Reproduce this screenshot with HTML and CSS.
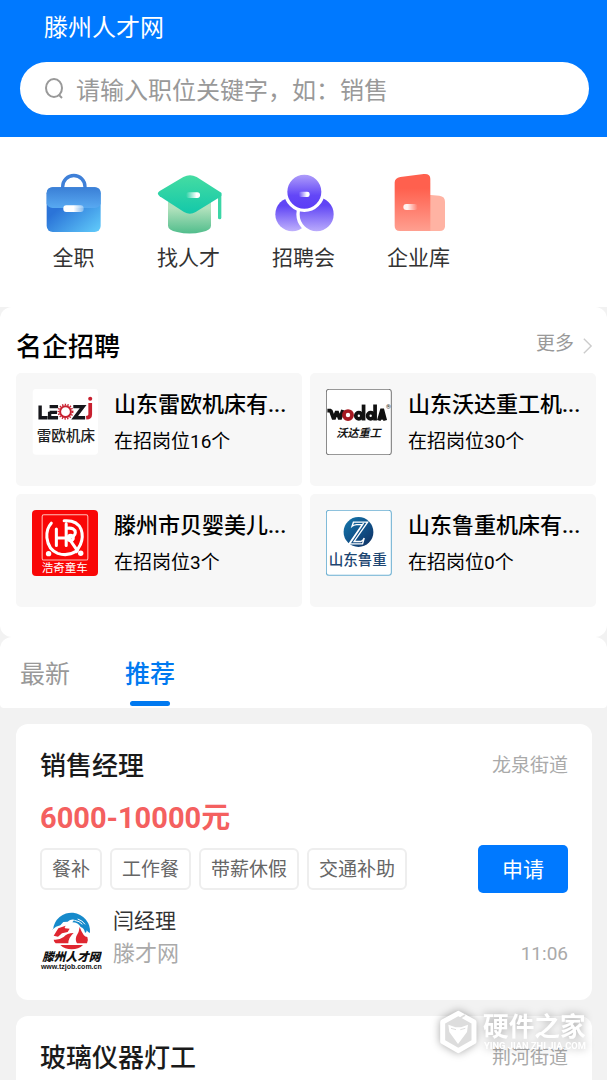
FILE: index.html
```html
<!DOCTYPE html>
<html lang="zh-CN">
<head>
<meta charset="utf-8">
<meta name="viewport" content="width=device-width, initial-scale=1">
<title>滕州人才网</title>
<link rel="stylesheet" href="styles.css">
</head>
<body>
<div class="app">
  <header class="header">
    <h1 class="header-title">滕州人才网</h1>
    <label class="search">
      <svg class="search-icon" viewBox="0 0 22 22" aria-hidden="true"><ellipse cx="10" cy="10" rx="8" ry="9"/><path d="M15 17l3 3"/></svg>
      <input class="search-input" type="search" aria-label="搜索职位" placeholder="请输入职位关键字，如：销售">
    </label>
  </header>

  <nav class="menu">
    <a class="menu-item" href="#full-time">
      <svg class="menu-icon" viewBox="34 30 198 198" aria-hidden="true">
        <defs>
          <linearGradient id="caseBody" x1="0" y1="0" x2="1" y2="1"><stop offset=".35" stop-color="#2b74d8"/><stop offset="1" stop-color="#62cdfb"/></linearGradient>
          <linearGradient id="caseTop" x1="0" y1="0" x2="0" y2="1"><stop offset="0" stop-color="#3a7fd6"/><stop offset="1" stop-color="#58a9f1"/></linearGradient>
          <linearGradient id="shine" x1="0" x2="1"><stop offset="0" stop-color="#fff"/><stop offset=".5" stop-color="#fff"/><stop offset="1" stop-color="#fff" stop-opacity=".35"/></linearGradient>
        </defs>
        <path d="M99 84v-4a33 33 0 0 1 67 0v4" fill="none" stroke="#3f80d8" stroke-width="10"/>
        <rect x="51" y="82" width="162" height="134" rx="18" fill="url(#caseBody)"/>
        <path d="M51 100q0-18 18-18h126q18 0 18 18v30q-2 13-18 14H69q-16-1-18-14z" fill="url(#caseTop)"/>
        <rect x="101" y="136" width="61" height="20" rx="9" fill="url(#shine)"/>
      </svg>
      <span>全职</span>
    </a>
    <a class="menu-item" href="#talent">
      <svg class="menu-icon" viewBox="378 30 198 198" aria-hidden="true">
        <defs>
          <linearGradient id="capTop" x1="0" y1="0" x2="0" y2="1"><stop offset="0" stop-color="#45dca2"/><stop offset="1" stop-color="#13c8aa"/></linearGradient>
          <linearGradient id="capBase" x1="0" y1="0" x2="0" y2="1"><stop offset=".2" stop-color="#b2e2bd"/><stop offset="1" stop-color="#51bd8c"/></linearGradient>
          <linearGradient id="shineRight" x1="0" x2="1"><stop offset="0" stop-color="#fff" stop-opacity="0"/><stop offset=".75" stop-color="#fff"/></linearGradient>
        </defs>
        <path d="M414 125h129v72q0 13-27 19-37 9-75 0-27-6-27-19z" fill="url(#capBase)"/>
        <path d="M569 106v67" stroke="#3bd6a6" stroke-width="10" stroke-linecap="round"/>
        <path d="M389 93l71-42q20-11 40 0l74 47q3 8-4 13l-73 45q-17 10-35 0l-73-47q-11-9 0-16z" fill="url(#capTop)"/>
        <rect x="468" y="97" width="42" height="17" rx="8" fill="url(#shineRight)"/>
      </svg>
      <span>找人才</span>
    </a>
    <a class="menu-item" href="#fairs">
      <svg class="menu-icon" viewBox="64 30 198 198" aria-hidden="true">
        <defs>
          <linearGradient id="ballTop" x1="0" y1="0" x2="0" y2="1"><stop offset="0" stop-color="#b5a4fa"/><stop offset=".6" stop-color="#6347f7"/><stop offset="1" stop-color="#5a3cf6"/></linearGradient>
          <linearGradient id="ballLow" x1="0" y1="0" x2="0" y2="1"><stop offset=".25" stop-color="#6045f5"/><stop offset="1" stop-color="#c0b2fc"/></linearGradient>
        </defs>
        <circle cx="128" cy="163" r="51" fill="url(#ballLow)"/>
        <circle cx="201" cy="163" r="56" fill="url(#ballLow)" stroke="#fff" stroke-width="10"/>
        <circle cx="164" cy="95" r="56" fill="url(#ballTop)" stroke="#fff" stroke-width="10"/>
        <rect x="147" y="95" width="33" height="16" rx="7" fill="url(#shineRight)"/>
      </svg>
      <span>招聘会</span>
    </a>
    <a class="menu-item" href="#companies">
      <svg class="menu-icon" viewBox="409 30 198 198" aria-hidden="true">
        <defs>
          <linearGradient id="tower" x1="0" y1="0" x2="0" y2="1"><stop offset=".25" stop-color="#ff604e"/><stop offset="1" stop-color="#ff9f90"/></linearGradient>
          <linearGradient id="shineLeft" x1="0" x2="1"><stop offset=".3" stop-color="#fff" stop-opacity=".9"/><stop offset="1" stop-color="#fff" stop-opacity="0"/></linearGradient>
        </defs>
        <path d="M535 104l34 3q17 2 17 18v74q0 14-16 14h-35z" fill="#ffb3a3"/>
        <path d="M435 68q0-14 17-17l70-9q20-2 20 15v156h-91q-16 0-16-15z" fill="url(#tower)"/>
        <rect x="461" y="132" width="43" height="18" rx="9" fill="url(#shineLeft)"/>
      </svg>
      <span>企业库</span>
    </a>
  </nav>

  <section class="famous">
    <div class="famous-head">
      <h2 class="famous-title">名企招聘</h2>
      <a class="more" href="#more">更多
        <svg class="more-icon" viewBox="0 0 12 20" aria-hidden="true"><path d="M2 2l8 8-8 8"/></svg>
      </a>
    </div>
    <div class="company-grid">
      <a class="company" href="#leozi">
        <svg class="company-logo" viewBox="97 267 195 195" role="img" aria-label="LEOZi">
          <rect x="99" y="267" width="193" height="194" rx="10" fill="#fff"/>
          <g fill="none" stroke="#17171c" stroke-width="10"><path d="M121 316v36h22M174 319h-25M171 336h-22M174 352h-25v-18M219 319h29l-25 33h31"/></g>
          <circle cx="196" cy="334" r="16" fill="none" stroke="#c8202f" stroke-width="6"/>
          <circle cx="196" cy="334" r="21" fill="none" stroke="#c8202f" stroke-width="5" stroke-dasharray="4 4"/>
          <path d="M269 308v34q0 9-12 10" fill="none" stroke="#c8202f" stroke-width="11"/>
          <circle cx="269" cy="296" r="6" fill="#c8202f"/>
          <text x="197" y="422" text-anchor="middle" font-size="43" font-weight="500" fill="#222">雷欧机床</text>
        </svg>
        <div class="company-text">
          <h3 class="company-name">山东雷欧机床有...</h3>
          <p class="company-count">在招岗位16个</p>
        </div>
      </a>
      <a class="company" href="#wodda">
        <svg class="company-logo" viewBox="79 266 195 195" role="img" aria-label="wodda">
          <rect x="80" y="267" width="192" height="193" rx="8" fill="#fff" stroke="#777" stroke-width="3"/>
          <g fill="none" stroke="#111" stroke-width="11" stroke-linejoin="bevel"><path d="M83 330h10l9 25 9-23 9 23 9-27"/><circle cx="144" cy="343" r="12" stroke="#a51820"/><circle cx="176" cy="345" r="9"/><path d="M190 312v47"/><circle cx="211" cy="345" r="9"/><path d="M224 312v47M235 359l10-34 9 34M238 351h13"/></g>
          <text x="256" y="324" font-size="18" fill="#222">®</text>
          <text x="175" y="409" text-anchor="middle" font-size="33" font-weight="700" font-style="italic" fill="#181818">沃达重工</text>
        </svg>
        <div class="company-text">
          <h3 class="company-name">山东沃达重工机...</h3>
          <p class="company-count">在招岗位30个</p>
        </div>
      </a>
      <a class="company" href="#haoqi">
        <svg class="company-logo" viewBox="97 75 195 195" role="img" aria-label="浩奇童车">
          <rect x="97" y="75" width="195" height="195" rx="12" fill="#f90707"/>
          <rect x="127" y="89" width="135" height="134" rx="5" fill="none" stroke="#ffc0b8" stroke-width="3"/>
          <g fill="none" stroke="#fff" stroke-width="9" stroke-linecap="round">
            <path d="M154 114q-15 16-13 43 4 35 32 46 30 10 54-6M169 131v49M169 158h29M198 116v64M192 107q38-3 50 25 8 23-2 45l-12 21"/>
            <path d="M200 129q24-3 25 13-1 13-20 15l26 38"/><circle cx="211" cy="158" r="8"/>
          </g>
          <circle cx="146" cy="204" r="8" fill="#fff"/><circle cx="241" cy="203" r="8" fill="#fff"/>
          <text x="194" y="257" text-anchor="middle" font-size="34" fill="#fff">浩奇童车</text>
        </svg>
        <div class="company-text">
          <h3 class="company-name">滕州市贝婴美儿...</h3>
          <p class="company-count">在招岗位3个</p>
        </div>
      </a>
      <a class="company" href="#luzhong">
        <svg class="company-logo" viewBox="79 75 195 195" role="img" aria-label="山东鲁重">
          <defs><linearGradient id="disc" x1="0" y1="0" x2="1" y2="1"><stop offset="0" stop-color="#1478ad"/><stop offset=".6" stop-color="#104c83"/><stop offset="1" stop-color="#112d5c"/></linearGradient></defs>
          <rect x="80" y="76" width="192" height="192" rx="8" fill="#fff" stroke="#6aafd2" stroke-width="3"/>
          <circle cx="175" cy="140" r="44" fill="url(#disc)"/>
          <path d="M156 123l4-12h42l-40 57h20q6-1 10-10l-5 17h-40l39-57h-17q-8 1-13 5zM190 114l-39 58" fill="none" stroke="#fff" stroke-width="4"/>
          <text x="173" y="237" text-anchor="middle" font-size="43" font-weight="500" fill="#1d4672">山东鲁重</text>
        </svg>
        <div class="company-text">
          <h3 class="company-name">山东鲁重机床有...</h3>
          <p class="company-count">在招岗位0个</p>
        </div>
      </a>
    </div>
  </section>

  <div class="tabs" role="tablist">
    <button class="tab" type="button" role="tab" aria-selected="false">最新</button>
    <button class="tab tab-active" type="button" role="tab" aria-selected="true">推荐</button>
  </div>

  <main class="jobs">
    <article class="job">
      <div class="job-head">
        <h2 class="job-title">销售经理</h2>
        <span class="job-place">龙泉街道</span>
      </div>
      <p class="job-pay">6000-10000元</p>
      <div class="job-row">
        <ul class="tags">
          <li class="tag">餐补</li>
          <li class="tag">工作餐</li>
          <li class="tag">带薪休假</li>
          <li class="tag">交通补助</li>
        </ul>
        <button class="apply" type="button">申请</button>
      </div>
      <div class="contact">
        <svg class="contact-logo" viewBox="63 50 186 186" role="img" aria-label="滕州人才网">
          <path d="M102 112A55 55 0 0 1 213 122q-6-2-10-8 0 8-5 7-2-13-13-17-7-14-25-14l6-8q-12-2-20 6l-13 1-9 10q-14 3-24 13z" fill="#168acb"/>
          <path d="M104 130l14-22 22-8q-5 6-2 8l14 1-6 10-17 4-12 10zM104 142q16 2 30-8 10-12 30-12-16 14-16 31h-38q-5-5-6-11zM182 104q-2 18-10 28-4 12 2 21h30q5-9 1-19-12 0-23-30z" fill="#df2630"/>
          <path d="M124 158h68q-13 13-34 13t-34-13z" fill="#df2630"/>
          <path d="M166 84q16 2 24 12M176 80q14 4 22 16" fill="none" stroke="#fff" stroke-width="3"/>
          <text x="157" y="207" text-anchor="middle" font-size="35" font-weight="900" font-style="italic" fill="#111">滕州人才网</text>
          <text x="157" y="231" text-anchor="middle" class="logo-url" font-size="21" font-weight="700" fill="#111">www.tzjob.com.cn</text>
        </svg>
        <div class="contact-text">
          <p class="contact-name">闫经理</p>
          <p class="contact-company">滕才网</p>
        </div>
        <time class="job-time">11:06</time>
      </div>
    </article>
    <article class="job">
      <div class="job-head">
        <h2 class="job-title">玻璃仪器灯工</h2>
        <span class="job-place">荆河街道</span>
      </div>
    </article>
  </main>

  <svg class="watermark" viewBox="405 315 465 159" role="img" aria-label="硬件之家">
    <path d="M475 340l47 26v59l-47 27-47-27v-59z" fill="#ddd" stroke="#fff" stroke-width="15" stroke-linejoin="round"/>
    <path d="M478 356l17-11" stroke="#ddd" stroke-width="5"/>
    <path d="M445 374l22 8h16l21-8-3 22-27 36-26-36z" fill="#fff"/><path d="M453 385l15 4M496 385l-15 4" stroke="#ddd" stroke-width="3"/>
    <text x="549" y="407" font-size="77" font-weight="700" fill="#fff">硬件之家</text>
    <text x="552" y="448" class="mark-url" font-size="28" font-weight="700" fill="#fff">YING JIAN ZHI JIA.COM</text>
  </svg>
</div>
</body>
</html>
```
FILE: styles.css
```css
* {
  box-sizing: border-box;
  margin: 0;
  padding: 0;
}

body {
  background: #f2f2f2;
  color: #000;
  font-family: Roboto, "Noto Sans CJK SC", sans-serif;
}

a {
  color: inherit;
  text-decoration: none;
}

button,
input {
  border: 0;
  font: inherit;
}

.app {
  position: relative;
  display: flex;
  flex-direction: column;
  height: 100vh;
  overflow: hidden;
}

.app > * {
  flex-shrink: 0;
}

.header {
  padding: 10px 18px 22px 20px;
  background: #0079ff;
}

.header-title {
  margin-bottom: 16px;
  padding-left: 24px;
  color: #fff;
  font-size: 24px;
  font-weight: 400;
  line-height: 36px;
}

.search {
  display: flex;
  align-items: center;
  gap: 10px;
  height: 53px;
  padding: 0 24px;
  border-radius: 27px;
  background: #fff;
}

.search-icon {
  flex: none;
  width: 22px;
  height: 22px;
  fill: none;
  stroke: #999;
  stroke-width: 2;
}

.search-input {
  flex: 1;
  min-width: 0;
  outline: 0;
  background: transparent;
  font-family: "Noto Sans CJK JP", sans-serif;
  font-size: 24px;
  line-height: 36px;
}

.search-input::placeholder {
  color: #999;
}

.menu {
  display: grid;
  grid-template-columns: repeat(5, 1fr);
  padding: 33px 16px;
  background: #fff;
}

.menu-item {
  display: flex;
  flex-direction: column;
  align-items: center;
  gap: 6px;
  color: #333;
  font-size: 21px;
  line-height: 32px;
}

.menu-icon {
  width: 66px;
  height: 66px;
}

.famous {
  padding: 18px 11px 30px 16px;
  border-radius: 12px;
  background: #fff;
}

.famous-head {
  display: flex;
  align-items: flex-start;
  justify-content: space-between;
  height: 48px;
}

.famous-title {
  padding-top: 4px;
  font-size: 26px;
  font-weight: 500;
  line-height: 36px;
}

.more {
  display: flex;
  align-items: center;
  gap: 8px;
  padding-top: 5px;
  padding-right: 3px;
  color: #999;
  font-size: 19px;
  line-height: 28px;
}

.more-icon {
  width: 11px;
  height: 20px;
  margin-top: 3px;
  fill: none;
  stroke: #ccc;
  stroke-width: 1.5;
}

.company-grid {
  display: grid;
  grid-template-columns: 1fr 1fr;
  gap: 8px;
}

.company {
  display: flex;
  gap: 16px;
  height: 113px;
  padding: 16px 8px 16px 16px;
  border-radius: 5px;
  background: #f7f7f7;
}

.company-logo {
  flex: none;
  width: 66px;
  height: 66px;
}

.company-text {
  min-width: 0;
}

.company-name {
  overflow: hidden;
  font-size: 22px;
  font-weight: 500;
  line-height: 32px;
  white-space: nowrap;
}

.company-count {
  margin-top: 7px;
  font-size: 19px;
  line-height: 28px;
}

.tabs {
  display: flex;
  gap: 55px;
  padding: 0 20px;
  border-radius: 12px 12px 4px 4px;
  background: #fff;
}

.tab {
  position: relative;
  padding: 20px 0 15px;
  background: transparent;
  color: #999;
  cursor: pointer;
  font-size: 25px;
  line-height: 36px;
}

.tab-active {
  color: #0079f0;
  font-weight: 500;
}

.tab-active::after {
  position: absolute;
  right: 5px;
  bottom: 2px;
  left: 5px;
  height: 5px;
  border-radius: 3px;
  background: #0079f0;
  content: "";
}

.jobs {
  display: flex;
  flex-direction: column;
  gap: 16px;
  padding: 16px 15px 16px 16px;
}

.job {
  padding: 24px 24px 29px;
  border-radius: 12px;
  background: #fff;
}

.job-head {
  display: flex;
  align-items: center;
  justify-content: space-between;
}

.job-title {
  color: #1a1a1a;
  font-size: 26px;
  font-weight: 500;
  line-height: 36px;
}

.job-place,
.job-time {
  color: #aaa;
  font-size: 19px;
  line-height: 28px;
}

.job-time {
  padding-bottom: 3px;
}

.job-pay {
  margin-top: 14px;
  color: #f4605f;
  font-size: 29px;
  font-weight: 700;
  line-height: 40px;
}

.job-row {
  display: flex;
  align-items: center;
  justify-content: space-between;
  margin-top: 7px;
}

.tags {
  display: flex;
  gap: 8px;
  list-style: none;
}

.tag {
  padding: 6px 10px 4px;
  border: 2px solid #eee;
  border-radius: 6px;
  color: #666;
  font-size: 19px;
  line-height: 28px;
}

.apply {
  width: 90px;
  height: 48px;
  padding-bottom: 3px;
  border-radius: 5px;
  background: #0079ff;
  color: #fff;
  cursor: pointer;
  font-size: 21px;
}

.contact {
  display: flex;
  align-items: flex-end;
  margin-top: 12px;
}

.contact-logo {
  width: 62px;
  height: 62px;
}

.contact-text {
  flex: 1;
  margin-left: 11px;
}

.contact-name {
  color: #333;
  font-size: 21px;
  line-height: 32px;
}

.contact-company {
  color: #aaa;
  font-size: 22px;
  line-height: 34px;
}

.logo-url {
  font-family: "Liberation Sans", sans-serif;
}

.mark-url {
  font-family: Roboto, sans-serif;
}

.watermark {
  position: absolute;
  right: 17px;
  bottom: 22px;
  width: 155px;
  height: 53px;
  filter: drop-shadow(0 0 4px rgba(0, 0, 0, 0.35));
}
```
